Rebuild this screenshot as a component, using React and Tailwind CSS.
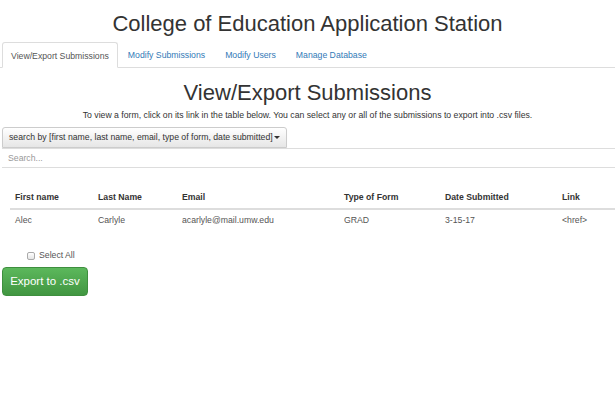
import React from 'react';

const tabs = ['View/Export Submissions', 'Modify Submissions', 'Modify Users', 'Manage Database'];

const rows = [
    { first: 'Alec', last: 'Carlyle', email: 'acarlyle@mail.umw.edu', type: 'GRAD', date: '3-15-17', link: '<href>' },
];

const App = () => {
    return (
        <div className="w-[615px] h-[402px] bg-white text-[#333] overflow-hidden" style={{ fontFamily: '"Liberation Sans", Arial, sans-serif' }}>
            {/* Page title */}
            <h1 className="text-center text-[22px] leading-none pt-[13px] h-[42px]">College of Education Application Station</h1>

            {/* Tabs */}
            <ul className="flex border-b border-[#ddd] h-[26px] pl-[2px]">
                {tabs.map((tab, i) => (
                    <li key={tab} className="-mb-px">
                        {i === 0 ? (
                            <span className="block h-[26px] px-[8px] pt-[7px] text-[8.7px] text-[#555] bg-white border border-[#ddd] border-b-white rounded-t-[3px]">
                                {tab}
                            </span>
                        ) : (
                            <span className="block h-[26px] px-[10px] pt-[7px] text-[8.7px] text-[#337ab7]">{tab}</span>
                        )}
                    </li>
                ))}
            </ul>

            {/* Section heading */}
            <h2 className="text-center text-[22px] leading-none pt-[14px] h-[42px]">View/Export Submissions</h2>
            <p className="text-center text-[8.7px] leading-none pt-[1px] h-[17px]">
                To view a form, click on its link in the table below. You can select any or all of the submissions to export into .csv files.
            </p>

            {/* Search */}
            <div className="pl-[2px]">
                <button className="h-[21px] w-[285px] px-[6px] text-left whitespace-nowrap text-[8.7px] text-[#333] border border-[#ccc] rounded-t-[3px] bg-gradient-to-b from-white to-[#e6e6e6] flex items-center shadow-[0_1px_1px_rgba(0,0,0,0.05)]">
                    search by [first name, last name, email, type of form, date submitted]
                    <span className="ml-[1px] inline-block border-x-[3px] border-x-transparent border-t-[3px] border-t-[#333]"></span>
                </button>
            </div>
            <div className="h-[20px] border-y border-[#ddd] ml-[2px] flex items-center px-[6px] pt-[2px] text-[8.7px] text-[#999]">Search...</div>

            {/* Table */}
            <table className="mt-[20px] ml-[10px] w-[605px] text-[8.7px] text-left border-collapse">
                <thead>
                    <tr className="border-b-2 border-[#ddd] h-[21px]">
                        <th className="pl-[5px] w-[88px] font-bold">First name</th>
                        <th className="w-[84px] font-bold">Last Name</th>
                        <th className="w-[162px] font-bold">Email</th>
                        <th className="w-[101px] font-bold">Type of Form</th>
                        <th className="w-[117px] font-bold">Date Submitted</th>
                        <th className="font-bold">Link</th>
                    </tr>
                </thead>
                <tbody>
                    {rows.map((r) => (
                        <tr key={r.email} className="h-[23px] text-[#555]">
                            <td className="pl-[5px]">{r.first}</td>
                            <td>{r.last}</td>
                            <td>{r.email}</td>
                            <td>{r.type}</td>
                            <td>{r.date}</td>
                            <td>{r.link}</td>
                        </tr>
                    ))}
                </tbody>
            </table>

            {/* Select all + export */}
            <label className="flex items-center gap-[4px] ml-[27px] mt-[17px] text-[8.7px] text-[#555]">
                <span className="w-[8px] h-[8px] border border-[#aaa] rounded-[2px] bg-gradient-to-b from-white to-[#e5e5e5]"></span>
                Select All
            </label>
            <button className="ml-[2px] mt-[5px] h-[29px] w-[86px] rounded-[4px] text-white text-[11.5px] border border-[#3e8f3e] bg-gradient-to-b from-[#5cb85c] to-[#419641]">
                Export to .csv
            </button>
        </div>
    );
};

export default App;
